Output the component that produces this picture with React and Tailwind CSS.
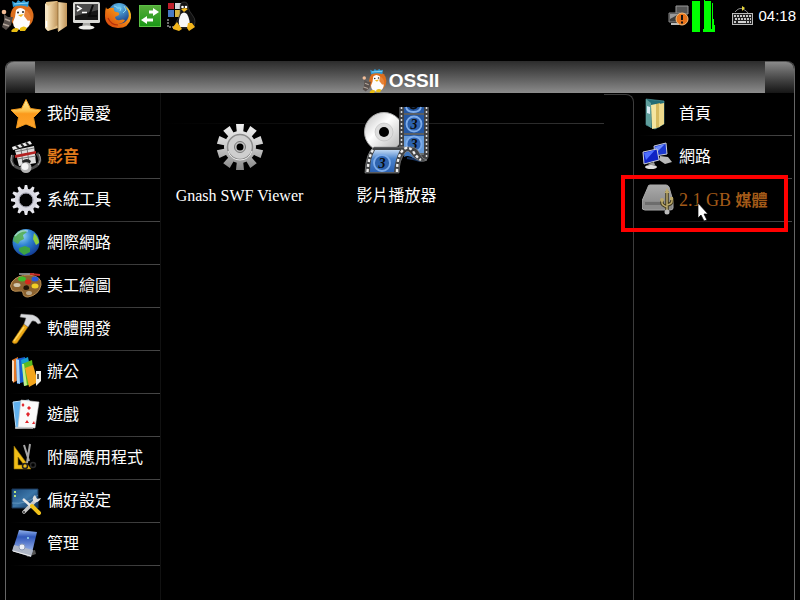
import React from 'react';

const svgProps = { viewBox: '0 0 32 32', className: 'w-8 h-8 shrink-0', 'aria-hidden': true };

/* ---------- Launcher and logo icons ---------- */

const Mascot = ({ className }) => (
  <svg viewBox="0 0 34 32" className={className} aria-hidden="true">
    <ellipse cx="22" cy="16" rx="11.500" ry="12.500" fill="#dd6f1d" />
    <path d="M13 7l-1-6 4 2 2-3 3 2 3-2 2 2 3-1-1 6q-7-3-15 0z" fill="#2d9ad6" />
    <path d="M14 4l14-1" stroke="#8ed6f5" strokeWidth="1.2" />
    <path d="M16 10q4-4 9 0l0 6 5 5q0 8-8 9-9 0-9-8l2-5z" fill="#fdfdfd" />
    <path d="M25 10q5 2 6 9l-3 2-4-5z" fill="#e98438" />
    <path d="M4 14l4 3 5 0-2 8-5 5-4-3 2-6z" fill="#59504c" />
    <path d="M5 19l5 2M3 24l6 2" stroke="#b3a69c" strokeWidth="1.4" />
    <circle cx="4" cy="12" r="2.3" fill="#f2bd98" />
    <circle cx="18" cy="12.500" r="1" fill="#222" />
    <circle cx="23" cy="12" r="1" fill="#222" />
    <path d="M18 15l6-1-3 3z" fill="#f1b51c" />
    <path d="M11 31q3-5 8-2l-2 3h-5zM20 28q4-3 7 0l-2 3-5 0z" fill="#e9bd12" />
  </svg>
);

const FolderIcon = () => (
  <svg {...svgProps}>
    <defs>
      <linearGradient id="fold" x1="0" x2="1">
        <stop offset="0" stopColor="#f5dfb4" />
        <stop offset="1" stopColor="#bf9358" />
      </linearGradient>
    </defs>
    <path d="M8 2l11-1 1 27-10 3-2-2z" fill="#e5c48c" />
    <path d="M7 3l3 3v25l-3-3z" fill="#f7e5c2" />
    <path d="M10 6L20 1v24l-10 6z" fill="url(#fold)" />
    <path d="M20 2l9 1v23l-9 6z" fill="url(#fold)" />
    <path d="M20 2v29" stroke="#8c6736" strokeWidth=".8" />
    <path d="M8.500 21v6" stroke="#fff" strokeWidth="1.4" />
  </svg>
);

const TerminalIcon = () => (
  <svg {...svgProps}>
    <rect x="3" y="2" width="27" height="21" rx="1.5" fill="#d9d9d5" />
    <rect x="5" y="4" width="23" height="16" fill="#161616" />
    <path d="M5 4h23v6L5 16z" fill="#4b4b4b" />
    <path d="M7 6l4 2.500L7 11M12 12.500h5" stroke="#fff" strokeWidth="1.5" fill="none" />
    <path d="M23 5l-4 11h8" stroke="#0a0a0a" strokeWidth="2" fill="none" />
    <path d="M13 23h7l1 4h-9z" fill="#a9a9a5" />
    <ellipse cx="16.500" cy="27.500" rx="8" ry="2" fill="#ecece8" />
  </svg>
);

const FirefoxIcon = () => (
  <svg {...svgProps}>
    <defs>
      <linearGradient id="fox" x1="0" y1="1" x2="1" y2="0">
        <stop offset="0" stopColor="#d33c0c" />
        <stop offset=".55" stopColor="#f08514" />
        <stop offset="1" stopColor="#ffd92e" />
      </linearGradient>
      <radialGradient id="foxGlobe" cx=".5" cy=".2" r=".8">
        <stop offset="0" stopColor="#62c3f0" />
        <stop offset="1" stopColor="#12307d" />
      </radialGradient>
    </defs>
    <circle cx="17" cy="14" r="11" fill="url(#foxGlobe)" />
    <path d="M12 6q3 0 3 2l4 0-1 3M22 6l2 4-3 3" stroke="#88d4f2" fill="none" />
    <path d="M4 7q0 2 2 2 2-2 6-1-1 3 2 4 4 0 3 3l-4 2q1 4 5 3 3-1 5 0-2 4-7 3 5 2 9-3 3-4 1-9l-3-5q7 4 6 12-2 10-13 10Q3 27 3 16 3 10 4 7z" fill="url(#fox)" />
    <path d="M6 18q3 7 10 7" stroke="#b62f0b" strokeWidth="1.2" fill="none" />
  </svg>
);

const SwapIcon = () => (
  <svg {...svgProps}>
    <defs>
      <linearGradient id="swap" x1="0" y1="0" x2="0" y2="1">
        <stop offset="0" stopColor="#58ad3b" />
        <stop offset="1" stopColor="#199616" />
      </linearGradient>
    </defs>
    <g transform="translate(4 0)">
      <rect x="1.500" y="5.500" width="21" height="21" fill="url(#swap)" stroke="#5bbf46" />
      <path d="M21 12l-6-4v2.500h-4v3h4V16zM3 20l6-4v2.500h6v3H9V24z" fill="#fff" />
    </g>
  </svg>
);

const TuxIcon = () => (
  <svg {...svgProps}>
    <path d="M2 3h6v6H2z" fill="#be1f2c" />
    <path d="M9 3h6v6H9z" fill="#d1d5dc" />
    <path d="M2 10h6v7H2z" fill="#4779c4" />
    <path d="M9 10h6v7H9z" fill="#d6b33e" />
    <path d="M2 19v8h6" stroke="#ddd" strokeDasharray="2 1" fill="none" />
    <path d="M14 7q0-5 4-5t4 5q1 4 5 9t0 12H11q-3-4 1-9 3-5 2-12z" fill="#111" stroke="#555" strokeWidth=".5" />
    <path d="M15 14q3-3 6 0 4 7 2 13h-9q-3-5 1-13z" fill="#f7f7f7" />
    <circle cx="16.500" cy="7" r="1.3" fill="#fff" />
    <circle cx="20" cy="7" r="1.3" fill="#fff" />
    <path d="M15 9l4-1 3 1-4 3z" fill="#f5b91a" />
    <path d="M7 27l4-5 5 7-3 2-6-2zM22 23l4 0 3 4-6 4-2-3z" fill="#f2b51b" />
  </svg>
);

/* ---------- Tray icons ---------- */

const NetworkAlertIcon = () => (
  <svg viewBox="0 0 22 24" className="w-[22px] h-6" aria-hidden="true">
    <path d="M8 2h12v8H8z" fill="#555" stroke="#999" />
    <path d="M1 9h11v9H1z" fill="#3b3b3b" stroke="#888" />
    <path d="M2 10h9l-9 5z" fill="#999" />
    <path d="M3 20h8" stroke="#bbb" strokeWidth="2" />
    <circle cx="14" cy="15" r="6" fill="#e8731a" stroke="#f7c07d" />
    <path d="M14 11v5M14 17.500v2" stroke="#111" strokeWidth="2" />
  </svg>
);

const LoadGraph = () => (
  <svg viewBox="0 0 24 32" className="w-6 h-8" aria-hidden="true">
    <path d="M0 1h8v31H0zM11 32v-3h1V0h1v1h6v28h1V3h1v16h1v6h1v7z" fill="#0f0" />
  </svg>
);

const KeyboardIcon = () => (
  <svg viewBox="0 0 22 20" className="w-[22px] h-5" aria-hidden="true">
    <path d="M3 6q4-5 8-3t5 4" stroke="#888" fill="none" />
    <path d="M10 0l3 2-3 3z" fill="#e8d63a" />
    <rect x=".5" y="7.500" width="20" height="11" fill="#222" stroke="#bbb" />
    <path d="M2 10h17M3 13h16M2 16h3M15 16h4" stroke="#fff" strokeWidth="1.6" strokeDasharray="2 1" />
    <path d="M6 16h8" stroke="#fff" strokeWidth="1.6" />
  </svg>
);

/* ---------- Category icons ---------- */

const StarIcon = () => (
  <svg {...svgProps}>
    <defs>
      <linearGradient id="star" x1="0" y1="0" x2="0" y2="1">
        <stop offset="0" stopColor="#fff0a0" />
        <stop offset=".4" stopColor="#fdc14a" />
        <stop offset=".5" stopColor="#fb9a1c" />
        <stop offset="1" stopColor="#ffa52c" />
      </linearGradient>
    </defs>
    <path d="M16 1.500l4.500 9 10.500 1.500-7.500 7.500 2 10.500-9.500-4-9.500 4 2-10.500L1 12l10.500-1.500z" fill="url(#star)" stroke="#f39a1d" strokeLinejoin="round" />
  </svg>
);

const MediaIcon = () => (
  <svg {...svgProps}>
    <path d="M2 6l18-6 2 3-19 6z" fill="#eee" />
    <path d="M6 4.500l3 3M11 3l3 3M16 1.500l3 3" stroke="#222" strokeWidth="2" />
    <path d="M5 9l19-4 2 17-17 3z" fill="#dedede" />
    <path d="M5 11l19-4M7 18l19-3M11 8l2 15M17 7l2 15" stroke="#777" />
    <path d="M5 14l21-4v2.500L5 17z" fill="#b32222" />
    <path d="M3 14q-5 11 9 14M27 12q8 11-7 16" stroke="#4a4a4a" strokeWidth="3" fill="none" />
    <path d="M1.500 14q-2 6 2 11M29 13q3 6-1 11" stroke="#aaa" fill="none" />
    <path d="M12 20q5-4 9 0l-2 4h-5z" fill="#222" />
    <circle cx="16" cy="26.500" r="5.500" fill="#b3b3b3" />
    <circle cx="15" cy="25.500" r="3.500" fill="#f4f4f4" />
  </svg>
);

const CogIcon = () => (
  <svg {...svgProps}>
    {[...Array(12)].map((_, i) => (
      <path key={i} d="M13.800 6l1-5h2.400l1 5z" fill="#e9e9ef" transform={`rotate(${i * 30} 16 16)`} />
    ))}
    <circle cx="16" cy="16" r="9" fill="none" stroke="#d9d9e2" strokeWidth="4.500" />
    <circle cx="16" cy="16" r="7" fill="none" stroke="#9393a0" />
  </svg>
);

const GlobeIcon = () => (
  <svg {...svgProps}>
    <defs>
      <radialGradient id="globe" cx=".35" cy=".25" r=".8">
        <stop offset="0" stopColor="#9ad9f8" />
        <stop offset=".45" stopColor="#2f83d2" />
        <stop offset="1" stopColor="#123a93" />
      </radialGradient>
    </defs>
    <circle cx="16" cy="15.500" r="13.500" fill="url(#globe)" />
    <path d="M4 9q4-6 10-6l3 2-4 3 1 4-4 2-2 3-5-3z" fill="#55ae4a" opacity=".85" />
    <path d="M9 21l6-2 5 2 0 4-6 3-5-4z" fill="#3da443" />
    <path d="M24 6q5 5 5 10l-3 2-3-6z" fill="#8fce3f" />
    <path d="M5 9q5-6 13-5" stroke="#c8edfc" strokeWidth="1.500" fill="none" opacity=".6" />
  </svg>
);

const PaletteIcon = () => (
  <svg {...svgProps}>
    <path d="M2 12q5-7 17-7 13 1 12 10-2 10-13 12-5 0-5-4 0-3-4-2-5 1-7-1-3-4 0-8z" fill="#8c6330" stroke="#bd9154" />
    <path d="M14 16q4-2 5 1t-3 3-2-4z" fill="#221608" />
    <ellipse cx="12" cy="9" rx="4" ry="2.500" fill="#3dbb2a" />
    <ellipse cx="25" cy="9" rx="3.500" ry="2.500" fill="#2858d8" />
    <ellipse cx="18" cy="12" rx="3" ry="2.400" fill="#d72a1c" />
    <ellipse cx="25" cy="16" rx="3.500" ry="2.500" fill="#f2cf24" />
    <ellipse cx="7" cy="15" rx="3.500" ry="2" fill="#d0c5ac" />
    <ellipse cx="19" cy="23" rx="3" ry="2" fill="#b9a98e" />
    <path d="M9 4l15 0" stroke="#aaa" strokeWidth="1.500" />
    <path d="M20 4l10 1" stroke="#c52c24" strokeWidth="2" />
  </svg>
);

const HammerIcon = () => (
  <svg {...svgProps}>
    <path d="M14 11l4 3L7 30q-3 2-5-1z" fill="#eda915" stroke="#8a5c06" strokeWidth=".6" />
    <path d="M14 14L4 28" stroke="#ffd65a" strokeWidth="1.500" />
    <path d="M11 1l12 1q6 2 8 8l-3 1q-3-4-6-3l-4 6-4-3 2-6-6-1z" fill="#d8dadd" stroke="#888" strokeWidth=".5" />
  </svg>
);

const BooksIcon = () => (
  <svg {...svgProps}>
    <path d="M2 4l6-3v23l-5 3z" fill="#e37624" />
    <path d="M2 4l2 1v21l-2-1z" fill="#f6d9be" />
    <path d="M6 3l9-2 2 24-10 3z" fill="#185bd0" />
    <path d="M6 3l3 1 1 24-3-1z" fill="#a9d5f8" />
    <path d="M11 4l7-3 5 25-9 4z" fill="#169fd2" />
    <path d="M12 8l10-4 3 23-10 3z" fill="#5abc1f" />
    <path d="M12 8l2 0 3 21-3 1z" fill="#c5f08d" />
    <path d="M15 12l8-3 5 17-9 5z" fill="#f3a51c" />
    <path d="M26 15l5 0v10l-5 5z" fill="#f2f2ec" />
    <path d="M28 18v5" stroke="#222" strokeWidth="1.500" />
  </svg>
);

const CardsIcon = () => (
  <svg {...svgProps}>
    <path d="M3 3l16-2 2 27-15 1z" fill="#5fb0ee" stroke="#b9ddf8" />
    <path d="M11 1l18 2-4 26-17-1z" fill="#fafafa" stroke="#ccc" strokeWidth=".6" />
    <path d="M13 4l1.500 2L13 8l-1.500-2zM19 7l2 2-2 2-2-2zM18 13l2 2-2 3-2-3zM17 21l2 3h-4zM24 22l1 3-3 0z" fill="#e1252b" />
    <path d="M5 29h18" stroke="#c9c9c9" strokeWidth="1.500" />
  </svg>
);

const RulerIcon = () => (
  <svg {...svgProps}>
    <path d="M4 4l17 23H4z M8 15v8h6z" fill="#f0bd17" fillRule="evenodd" stroke="#8b6a05" strokeWidth=".6" />
    <path d="M14 3l5 16M20 2l-3 19" stroke="#a5a5a5" strokeWidth="2" />
    <circle cx="15" cy="24" r="2.500" stroke="#222" strokeWidth="1.500" fill="none" />
    <circle cx="23" cy="23" r="2.500" stroke="#2a2a2a" strokeWidth="1.500" fill="none" />
  </svg>
);

const PreferencesIcon = () => (
  <svg {...svgProps}>
    <defs>
      <linearGradient id="desk" x1="0" y1="0" x2="1" y2="1">
        <stop offset="0" stopColor="#1d4d80" />
        <stop offset=".5" stopColor="#3c76a8" />
        <stop offset="1" stopColor="#0d2d55" />
      </linearGradient>
    </defs>
    <path d="M2 4h26v19H2z" fill="url(#desk)" stroke="#1b3554" />
    <path d="M4 6h2v2H4zM4 10h2v2H4z" fill="#b5df7d" />
    <path d="M2 18q14 2 26-8" stroke="#77a6cc" fill="none" opacity=".6" />
    <path d="M14 27L26 15" stroke="#c9c9c9" strokeWidth="3.500" strokeLinecap="round" />
    <path d="M25 10q-4 3-1 7 5 1 7-4l-4 1-1-2z" fill="#ddd" />
    <path d="M13 14l9 8" stroke="#e7e7e7" strokeWidth="2.400" />
    <path d="M22 21l7 7" stroke="#f1c21a" strokeWidth="4" strokeLinecap="round" />
    <circle cx="14" cy="27" r="1" fill="#333" />
  </svg>
);

const AdminIcon = () => (
  <svg {...svgProps}>
    <defs>
      <linearGradient id="admin" x1="0" y1="0" x2="0" y2="1">
        <stop offset="0" stopColor="#93b3ee" />
        <stop offset=".3" stopColor="#3158ba" />
        <stop offset="1" stopColor="#a5bdf0" />
      </linearGradient>
    </defs>
    <path d="M19 23l6-1 1 4-9 3z" fill="#555" />
    <path d="M9 2l18 2-5 21-19-4z" fill="url(#admin)" />
    <path d="M4 17l19 5-2 7-19-6z" fill="#aeb6c6" />
    <circle cx="12" cy="19" r="3" fill="#edf0f7" stroke="#8a98b4" />
    <circle cx="18" cy="10" r="1" fill="#9ce0f5" />
    <path d="M3 23l18 5" stroke="#eee" />
  </svg>
);

/* ---------- Place icons ---------- */

const HomeFolderIcon = () => (
  <svg {...svgProps}>
    <path d="M4 1l18 2v23l-9 5-9-4z" fill="#226c75" stroke="#5aa5aa" strokeWidth=".6" />
    <path d="M4 1l5 4v25l-5-4z" fill="#5f9f9d" />
    <path d="M9 7l5-1 1 24-5 1z" fill="#f4e5a0" />
    <path d="M14 6l4-1v24l-4 1z" fill="#d6bb60" />
    <path d="M17 6l5-1v21l-5 3z" fill="#edd98b" />
    <path d="M5 8l3 1v7l-3-1z" fill="#d7ecf5" />
  </svg>
);

const NetworkIcon = () => (
  <svg {...svgProps}>
    <path d="M12 5l12-3 1 11-12 2z" fill="#1c39ce" stroke="#c8ccd8" />
    <path d="M13 6l10-3-9 9z" fill="#6e8dff" />
    <path d="M18 15l8 1 4 5-7 2-6-4z" fill="#b9b9b9" />
    <path d="M1 11l14-3 2 11-15 4z" fill="#1024c4" stroke="#c8ccd8" />
    <path d="M2 12l11-3-9 10z" fill="#4e6fff" />
    <path d="M6 23l6-2 1 3-5 1z" fill="#999" />
    <ellipse cx="9" cy="26" rx="6" ry="2" fill="#ddd" />
  </svg>
);

const UsbDriveIcon = () => (
  <svg {...svgProps}>
    <defs>
      <linearGradient id="usb" x1="0" y1="0" x2="0" y2="1">
        <stop offset="0" stopColor="#aaa" />
        <stop offset="1" stopColor="#828282" />
      </linearGradient>
    </defs>
    <path d="M6 3q0-2 2-2h16q2 0 3 2l4 14v7q0 2-3 2H3q-3 0-3-3v-6z" fill="url(#usb)" stroke="#aaa" />
    <path d="M1 17h28v8H2z" fill="#8b8b8b" />
    <path d="M3 18h16v3H3z" fill="#6d6d6d" />
    <path d="M25 7v21M20 16v3q0 2 5 4M30 14v3q0 3-5 4" stroke="#40391e" strokeWidth="3.500" fill="none" />
    <path d="M25 8v20M20 16v3q0 2 5 4M30 14v3q0 3-5 4" stroke="#bba96b" strokeWidth="1.500" fill="none" />
    <path d="M25 4l2.500 5h-5z" fill="#bba96b" />
    <circle cx="20" cy="16" r="2" fill="#bba96b" />
    <path d="M28 13h3v3h-3z" fill="#bba96b" />
    <circle cx="25" cy="28" r="2.500" fill="#bbb" />
  </svg>
);

/* ---------- Application icons ---------- */

const GearAppIcon = () => (
  <svg viewBox="0 0 68 68" className="w-[68px] h-[68px]" aria-hidden="true">
    <defs>
      <linearGradient id="gear" gradientUnits="userSpaceOnUse" x1="0" y1="18" x2="0" y2="64">
        <stop offset="0" stopColor="#f1f1f1" />
        <stop offset=".5" stopColor="#c9c9c9" />
        <stop offset="1" stopColor="#858585" />
      </linearGradient>
      <mask id="teeth" maskUnits="userSpaceOnUse" x="0" y="0" width="68" height="68">
        {[...Array(10)].map((_, i) => (
          <path key={i} d="M31 28l-1-10h8l-1 10z" fill="#fff" transform={`rotate(${i * 36} 34 41)`} />
        ))}
        <circle cx="34" cy="41" r="16" fill="#fff" />
      </mask>
    </defs>
    <rect width="68" height="68" fill="url(#gear)" mask="url(#teeth)" />
    <circle cx="34" cy="41" r="12.500" fill="#cfcfcf" stroke="#8c8c8c" strokeWidth="1.500" />
    <path d="M22 45q3 9 12 9t12-9" stroke="#eee" fill="none" />
    <circle cx="34" cy="41" r="5.500" fill="#c4c4c4" stroke="#777" />
    <circle cx="34" cy="41" r="3.500" fill="#000" />
  </svg>
);

const Frame = ({ x, y, r }) => (
  <g>
    <circle cx={x} cy={y} r={r} fill="#2d62ae" stroke="#7fadea" strokeWidth="1.800" />
    <text x={x} y={y + 5} textAnchor="middle" fontFamily="Liberation Serif, serif" fontWeight="700" fontStyle="italic" fontSize="14" fill="#0a0a0a">3</text>
  </g>
);

const VideoAppIcon = () => (
  <svg viewBox="0 0 68 68" className="w-[68px] h-[68px]" aria-hidden="true">
    <defs>
      <linearGradient id="disc" x1="0" y1="0" x2="1" y2="1">
        <stop offset="0" stopColor="#bbb" />
        <stop offset=".4" stopColor="#fff" />
        <stop offset="1" stopColor="#aaa" />
      </linearGradient>
      <linearGradient id="film" x1="0" y1="0" x2="0" y2="1">
        <stop offset="0" stopColor="#c0d8f4" />
        <stop offset=".4" stopColor="#4b83cb" />
        <stop offset="1" stopColor="#2b62b4" />
      </linearGradient>
    </defs>
    <circle cx="21" cy="26" r="19.500" fill="url(#disc)" stroke="#aaa" />
    <circle cx="21" cy="26" r="9" fill="#ddd" stroke="#bbb" strokeWidth=".6" />
    <circle cx="21" cy="26" r="5" fill="#000" />

    {/* upright part of the strip */}
    <path d="M36 1h30v47q0 7-6 7-6 0-10-6l-14-8z" fill="#3f4042" />
    <path d="M41 1h20v48H50l-9-6z" fill="#2457a2" />
    <path d="M41 30h20v19H50l-9-6z" fill="#669ad8" />
    <path d="M43 1q1 5 7.500 5T58 1" stroke="#7fadea" strokeWidth="1.800" fill="none" />
    <path d="M47 1q3 3 7 0" stroke="#0a0a0a" strokeWidth="2" fill="none" />
    <path d="M41 8h20M41 28h20M41 48h20" stroke="#6a6250" strokeWidth="1.500" />
    <Frame x={51} y={18} r={7.500} />
    <Frame x={51} y={38} r={7.500} />
    <path d="M38.500 1v42M63.500 1v50" stroke="#ddd" strokeWidth="1.500" strokeDasharray="2 2" />

    {/* curl and the front part */}
    <path d="M42 44q8-6 13 3 3 7 8 7-7 3-12-1-5-5-10-2z" fill="#3f76bd" />
    <path d="M44 52q8 1 13 3" stroke="#16325d" strokeWidth="2" fill="none" />
    <path d="M2 67q1-21 9-26h37q6 0 9 7 3 6 7 6-3 2-7 1-6-2-9-7-3-5-6-1-6 7-6 20z" fill="#424446" stroke="#999" strokeWidth=".6" />
    <path d="M7 66q0-14 5-22h25q-5 9-6 22z" fill="url(#film)" />
    <path d="M4.500 66q1-16 6-23M34 66q0-17 7-23 5-3 9 2 4 7 8 9" stroke="#eee" strokeWidth="2.400" strokeDasharray="3 2" fill="none" />
    <Frame x={19} y={57} r={8} />
  </svg>
);

const launchers = [
  { name: '檔案管理', Icon: FolderIcon },
  { name: '終端機', Icon: TerminalIcon },
  { name: 'Firefox', Icon: FirefoxIcon },
  { name: '切換', Icon: SwapIcon },
  { name: 'Tux', Icon: TuxIcon },
];

const categories = [
  { label: '我的最愛', Icon: StarIcon },
  { label: '影音', Icon: MediaIcon, active: true },
  { label: '系統工具', Icon: CogIcon },
  { label: '網際網路', Icon: GlobeIcon },
  { label: '美工繪圖', Icon: PaletteIcon },
  { label: '軟體開發', Icon: HammerIcon },
  { label: '辦公', Icon: BooksIcon },
  { label: '遊戲', Icon: CardsIcon },
  { label: '附屬應用程式', Icon: RulerIcon },
  { label: '偏好設定', Icon: PreferencesIcon },
  { label: '管理', Icon: AdminIcon },
];

const apps = [
  { label: 'Gnash SWF Viewer', Icon: GearAppIcon },
  { label: '影片播放器', Icon: VideoAppIcon },
];

const Separator = () => <div className="h-px ml-1 bg-linear-to-r from-transparent to-[#484848]" />;

const TopBar = () => (
  <header className="flex items-start justify-between h-[61px]">
    <div className="flex">
      <button aria-label="OSSII" className="w-[38px]">
        <Mascot className="w-[34px] h-8" />
      </button>
      {launchers.map(({ name, Icon }) => (
        <button key={name} aria-label={name} className="w-8 h-8">
          <Icon />
        </button>
      ))}
    </div>
    <div className="flex items-center h-8 pr-1">
      <NetworkAlertIcon />
      <div className="ml-0.5 mr-4">
        <LoadGraph />
      </div>
      <KeyboardIcon />
      <time className="ml-1 text-[15px] font-['Liberation_Sans',sans-serif]">04:18</time>
    </div>
  </header>
);

const TitleBar = () => (
  <div className="flex h-8 px-[29px] rounded-t-lg border-t border-[#555] bg-linear-to-b from-[#8a8a8a] to-[#161616]">
    <div className="flex-1 flex flex-col -mt-px">
      <div className="flex-1 flex items-center justify-center gap-0.5 bg-linear-to-b from-[#2c2c2c] to-[#8c8c8c]">
        <Mascot className="w-[26px] h-6 mt-2" />
        <h1 className="mt-2 text-[19px] leading-6 font-bold font-['Liberation_Sans',sans-serif]">OSSII</h1>
      </div>
      <div className="h-px bg-[#333]" />
      <div className="h-px bg-[#858585]" />
      <div className="h-0.5 bg-[#1c1c1c]" />
    </div>
  </div>
);

const Categories = () => (
  <nav className="w-[155px] shrink-0 border-r border-[#111]">
    <ul>
      {categories.map(({ label, Icon, active }) => (
        <li key={label}>
          <button className="flex items-center gap-[5px] w-full h-[42px] pl-1 text-left">
            <Icon />
            <span className={active ? 'font-bold text-[#e07a1c]' : ''}>{label}</span>
          </button>
          <Separator />
        </li>
      ))}
    </ul>
  </nav>
);

const AppGrid = () => (
  <main className="flex flex-1">
    <div className="relative flex-1">
      <div className="absolute inset-x-0 top-[30px] h-px bg-linear-to-r from-transparent to-[#333]" />
      <div className="relative flex flex-wrap pt-[13px]">
        {apps.map(({ label, Icon }) => (
          <button key={label} className="flex flex-col items-center gap-2.5 w-[157px]">
            <Icon />
            <span className="leading-6">{label}</span>
          </button>
        ))}
      </div>
    </div>
    <div className="w-[30px] mt-px rounded-tr-lg border-t border-r border-[#3c3c3c]" />
  </main>
);

const Pointer = () => (
  <svg viewBox="0 0 12 20" className="absolute left-[72px] top-[23px] w-3 h-5" aria-hidden="true">
    <path d="M1 1v15l3-3 3 6 3-1-3-6h4z" fill="#fff" stroke="#000" strokeWidth=".7" />
  </svg>
);

const Places = () => (
  <aside className="w-[160px] shrink-0 pr-0.5">
    <ul className="[&_button]:flex [&_button]:items-center [&_button]:gap-[5px] [&_button]:w-full [&_button]:h-[42px] [&_button]:pl-2">
      <li>
        <button><HomeFolderIcon />首頁</button>
        <Separator />
      </li>
      <li>
        <button><NetworkIcon />網路</button>
        <Separator />
      </li>
      <li className="relative">
        <button className="text-[#a35a18]">
          <UsbDriveIcon />
          <span className="whitespace-nowrap"><span className="text-lg leading-6">2.1 GB </span><b>媒體</b></span>
        </button>
        <Separator />
        {/* Highlight around the mounted drive */}
        <div className="absolute -left-[13px] right-1 -top-1 -bottom-2.5 border-4 border-[#f00]">
          <Pointer />
        </div>
      </li>
    </ul>
  </aside>
);

export default function App() {
  return (
    <div className="flex flex-col min-h-screen bg-black text-white text-base leading-6 font-['Liberation_Serif','Noto_Sans_CJK_TC',serif]">
      <TopBar />
      <div className="flex-1 flex flex-col mx-[5px] rounded-t-lg border-x border-[#666]">
        <TitleBar />
        <div className="flex flex-1">
          <Categories />
          <AppGrid />
          <Places />
        </div>
      </div>
    </div>
  );
}
